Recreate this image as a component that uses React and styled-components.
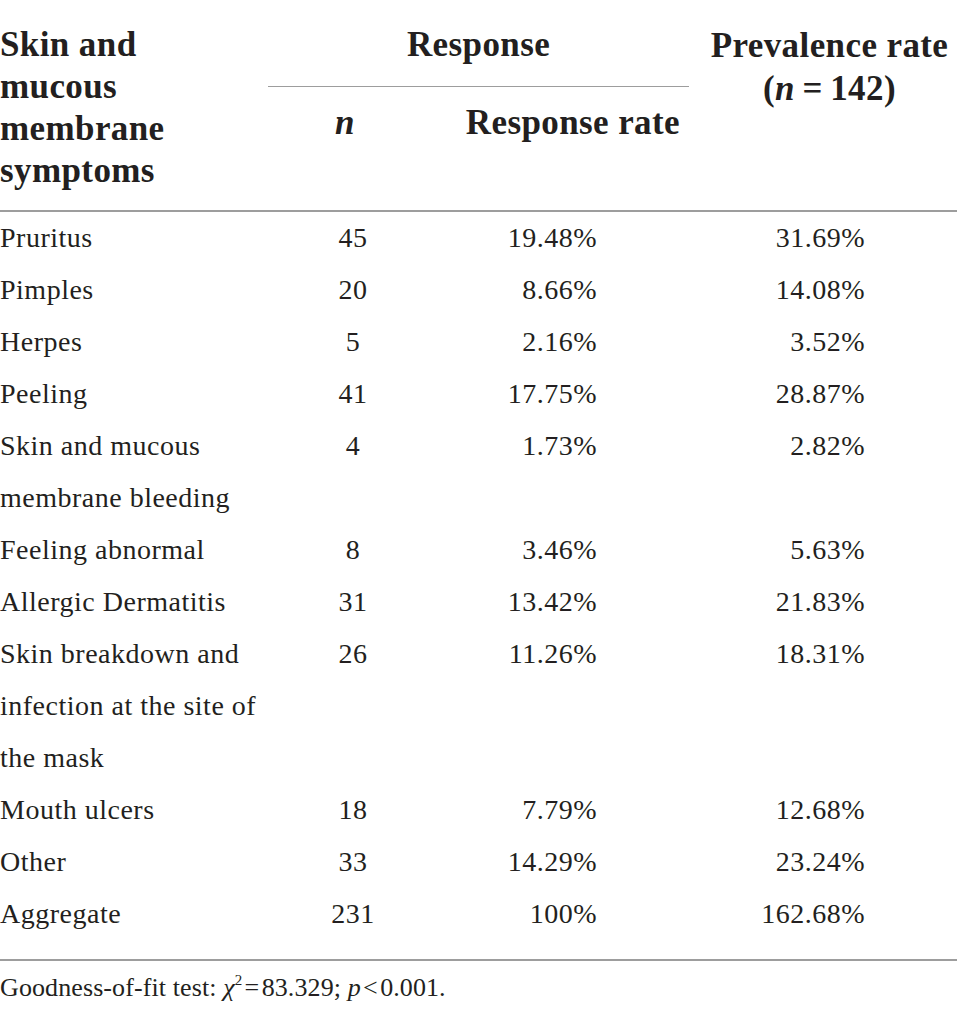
import React from "react";
import styled, { createGlobalStyle } from "styled-components";

const Global = createGlobalStyle`
  html, body { margin: 0; padding: 0; background: #ffffff; }
  body { font-family: "Liberation Serif", "Times New Roman", serif; color: #231f20; }
`;

const COLS = "268px 170px 251px 268px";

const Page = styled.div`
  width: 957px;
`;

const Header = styled.div`
  display: grid;
  grid-template-columns: ${COLS};
  grid-template-rows: auto 1fr;
  border-bottom: 2px solid #9d9d9d;
  font-weight: 700;
  font-size: 35px;
  letter-spacing: 0.4px;
  line-height: 42px;
`;

const HeadCell = styled.div`
  grid-column: ${(p) => p.$col};
  grid-row: ${(p) => p.$row};
  text-align: ${(p) => p.$align || "left"};
  padding: ${(p) => p.$pad || "0"};
  line-height: ${(p) => p.$lh || "42px"};
  border-bottom: ${(p) => (p.$rule ? "1.5px solid #9d9d9d" : "none")};
  white-space: nowrap;
`;

const Line = styled.span`
  display: block;
`;

const It = styled.i`
  font-style: italic;
`;

const Body = styled.div`
  padding-bottom: 19px;
  border-bottom: 2px solid #9d9d9d;
  font-size: 28px;
  letter-spacing: 0.5px;
  line-height: 52px;
`;

const Row = styled.div`
  display: grid;
  grid-template-columns: ${COLS};
  align-items: start;
`;

const Cell = styled.div`
  text-align: ${(p) => p.$align || "left"};
  padding-right: ${(p) => p.$pr || 0}px;
  white-space: nowrap;
`;

const Note = styled.div`
  font-size: 26px;
  letter-spacing: 0.1px;
  line-height: 36px;
  padding-top: 9px;
  white-space: nowrap;
`;

const Sup = styled.sup`
  font-size: 15px;
  vertical-align: 11px;
  line-height: 0;
`;

const Thin = () => <span>{"\u2009"}</span>;
const Hair = () => <span>{"\u200A"}</span>;

const rows = [
  { label: ["Pruritus"], n: 45, rr: "19.48%", pr: "31.69%" },
  { label: ["Pimples"], n: 20, rr: "8.66%", pr: "14.08%" },
  { label: ["Herpes"], n: 5, rr: "2.16%", pr: "3.52%" },
  { label: ["Peeling"], n: 41, rr: "17.75%", pr: "28.87%" },
  { label: ["Skin and mucous", "membrane bleeding"], n: 4, rr: "1.73%", pr: "2.82%" },
  { label: ["Feeling abnormal"], n: 8, rr: "3.46%", pr: "5.63%" },
  { label: ["Allergic Dermatitis"], n: 31, rr: "13.42%", pr: "21.83%" },
  {
    label: ["Skin breakdown and", "infection at the site of", "the mask"],
    n: 26,
    rr: "11.26%",
    pr: "18.31%",
  },
  { label: ["Mouth ulcers"], n: 18, rr: "7.79%", pr: "12.68%" },
  { label: ["Other"], n: 33, rr: "14.29%", pr: "23.24%" },
  { label: ["Aggregate"], n: 231, rr: "100%", pr: "162.68%" },
];

export default function App() {
  return (
    <Page>
      <Global />
      <Header>
        <HeadCell $col="1" $row="1 / span 2" $pad="24px 0 18px 0">
          <Line>Skin and</Line>
          <Line>mucous</Line>
          <Line>membrane</Line>
          <Line>symptoms</Line>
        </HeadCell>
        <HeadCell $col="2 / span 2" $row="1" $align="center" $pad="24px 0 20px 0" $rule>
          Response
        </HeadCell>
        <HeadCell $col="2" $row="2" $align="center" $pad="15px 16px 0 0">
          <It>n</It>
        </HeadCell>
        <HeadCell $col="3" $row="2" $align="right" $pad="15px 9px 0 0">
          Response rate
        </HeadCell>
        <HeadCell $col="4" $row="1 / span 2" $align="center" $pad="24px 0 0 13px" $lh="43px">
          <Line>Prevalence rate</Line>
          <Line>
            (<It>n</It>
            <Thin />=<Thin />
            142)
          </Line>
        </HeadCell>
      </Header>
      <Body>
        {rows.map((r) => (
          <Row key={r.label.join(" ")}>
            <Cell>
              {r.label.map((l) => (
                <Line key={l}>{l}</Line>
              ))}
            </Cell>
            <Cell $align="center">{r.n}</Cell>
            <Cell $align="right" $pr={92}>
              {r.rr}
            </Cell>
            <Cell $align="right" $pr={92}>
              {r.pr}
            </Cell>
          </Row>
        ))}
      </Body>
      <Note>
        Goodness-of-fit test: <It>χ</It>
        <Sup>2</Sup>
        <Hair />=<Hair />83.329; <It>p</It>
        <Hair />&lt;<Hair />0.001.
      </Note>
    </Page>
  );
}
